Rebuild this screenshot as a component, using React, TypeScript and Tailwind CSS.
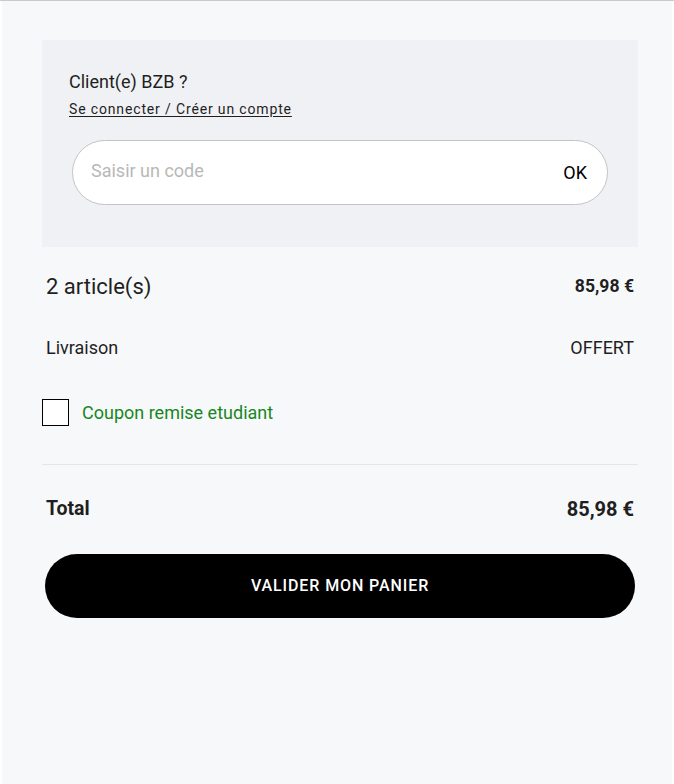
export default function App() {
  return (
    <div className="min-h-[784px] bg-white border-t border-[#c9cacc] font-['Roboto',sans-serif] text-[#1f1f1f]">
      <div className="mx-[2px] min-h-[783px] bg-[#f7f8fa] pt-[39px]">
        <div className="ml-[40px] w-[596px]">
          <div className="bg-[#f0f1f4] pt-[30px] pb-[42px]">
            <p className="pl-[27px] text-[18px] leading-[24px]">Client(e) BZB ?</p>
            <a href="#" className="block pl-[27px] mt-[5px] text-[14px] leading-[20px] tracking-[0.85px] underline underline-offset-2">
              Se connecter / Créer un compte
            </a>
            <div className="mx-[30px] mt-[21px] h-[65px] rounded-full border border-[#c4c4c6] bg-white flex items-center justify-between pl-[18px] pr-[20px]">
              <input
                placeholder="Saisir un code"
                className="flex-1 bg-transparent outline-none text-[18px] placeholder:text-[#b8b8b8] -mt-[4px]"
              />
              <button className="text-[18px] text-black">OK</button>
            </div>
          </div>

          <div className="px-[4px]">
            <div className="mt-[24px] flex items-center justify-between h-[30px]">
              <span className="text-[22px]">2 article(s)</span>
              <span className="text-[17.6px] font-bold">85,98 €</span>
            </div>
            <div className="mt-[33px] flex items-center justify-between h-[26px]">
              <span className="text-[18px]">Livraison</span>
              <span className="text-[18px]">OFFERT</span>
            </div>
          </div>

          <label className="mt-[39px] flex items-center gap-[13px] h-[27px]">
            <span className="w-[27px] h-[27px] border border-black bg-white block" />
            <span className="text-[18px] leading-[26px] text-[#17871f]">Coupon remise etudiant</span>
          </label>

          <div className="mt-[38px] border-t border-[#e4e5e8]" />

          <div className="px-[4px] mt-[31px] flex items-center justify-between h-[26px]">
            <span className="text-[19.5px] font-bold">Total</span>
            <span className="text-[20px] font-bold">85,98 €</span>
          </div>

          <button className="mt-[32px] ml-[3px] w-[590px] h-[64px] rounded-full bg-black text-white text-[16px] font-medium tracking-[0.9px]">
            VALIDER MON PANIER
          </button>
        </div>
      </div>
    </div>
  )
}
